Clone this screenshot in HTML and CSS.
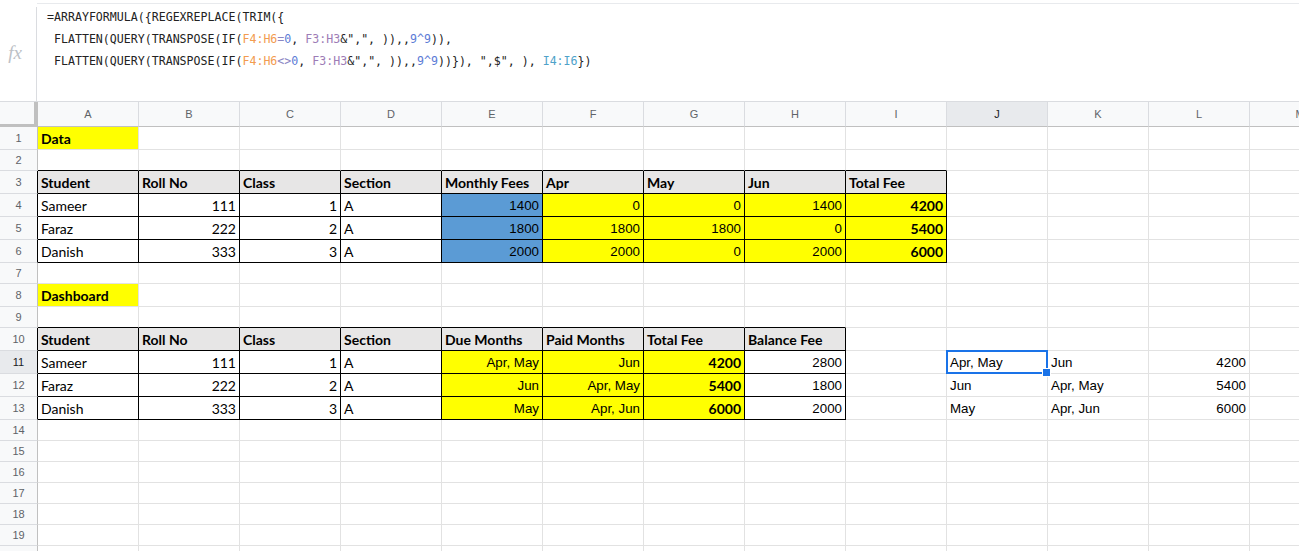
FILE: index.html
```html
<!DOCTYPE html>
<html lang="en">
<head>
    <meta charset="UTF-8">
    <meta name="viewport" content="width=device-width, initial-scale=1.0">
    <title>Fee Dashboard</title>
    <link rel="stylesheet" href="styles.css">
</head>
<body>

<div class="sheet">
    <!-- Formula bar (expanded) -->
    <div class="formula-bar">
        <div class="fx">fx</div>
        <div class="formula">
            <div class="f-line">=ARRAYFORMULA({REGEXREPLACE(TRIM({</div>
            <div class="f-line"> FLATTEN(QUERY(TRANSPOSE(IF(<span class="rg1">F4:H6</span><span class="op">=</span><span class="num">0</span>, <span class="rg2">F3:H3</span>&amp;",", )),,<span class="num">9^9</span>)),</div>
            <div class="f-line"> FLATTEN(QUERY(TRANSPOSE(IF(<span class="rg1">F4:H6</span><span class="op">&lt;&gt;</span><span class="num">0</span>, <span class="rg2">F3:H3</span>&amp;",", )),,<span class="num">9^9</span>))}), ",$", ), <span class="rg3">I4:I6</span>})</div>
        </div>
    </div>

    <!-- Grid -->
    <div class="grid" id="grid"></div>
</div>

<script>
    const COLS = 'ABCDEFGHIJKLM'.split('');
    const TALL = [1, 3, 4, 5, 6, 8, 10, 11, 12, 13];
    const ROWS = 20;

    // [text, classes] per column, starting at A
    const data = {
        1: [['Data', 'y b']],
        3: [['Student', 'th'], ['Roll No', 'th'], ['Class', 'th'], ['Section', 'th'], ['Monthly Fees', 'th'], ['Apr', 'th'], ['May', 'th'], ['Jun', 'th'], ['Total Fee', 'th']],
        4: [['Sameer', ''], ['111', 'n'], ['1', 'n'], ['A', ''], ['1400', 'n p blue'], ['0', 'n p y'], ['0', 'n p y'], ['1400', 'n p y'], ['4200', 'n y b']],
        5: [['Faraz', ''], ['222', 'n'], ['2', 'n'], ['A', ''], ['1800', 'n p blue'], ['1800', 'n p y'], ['1800', 'n p y'], ['0', 'n p y'], ['5400', 'n y b']],
        6: [['Danish', ''], ['333', 'n'], ['3', 'n'], ['A', ''], ['2000', 'n p blue'], ['2000', 'n p y'], ['0', 'n p y'], ['2000', 'n p y'], ['6000', 'n y b']],
        8: [['Dashboard', 'y b']],
        10: [['Student', 'th'], ['Roll No', 'th'], ['Class', 'th'], ['Section', 'th'], ['Due Months', 'th'], ['Paid Months', 'th'], ['Total Fee', 'th'], ['Balance Fee', 'th']],
        11: [['Sameer', ''], ['111', 'n'], ['1', 'n'], ['A', ''], ['Apr, May', 'n p y'], ['Jun', 'n p y'], ['4200', 'n y b'], ['2800', 'n p'], null, ['Apr, May', 'p active'], ['Jun', 'p'], ['4200', 'n p']],
        12: [['Faraz', ''], ['222', 'n'], ['2', 'n'], ['A', ''], ['Jun', 'n p y'], ['Apr, May', 'n p y'], ['5400', 'n y b'], ['1800', 'n p'], null, ['Jun', 'p'], ['Apr, May', 'p'], ['5400', 'n p']],
        13: [['Danish', ''], ['333', 'n'], ['3', 'n'], ['A', ''], ['May', 'n p y'], ['Apr, Jun', 'n p y'], ['6000', 'n y b'], ['2000', 'n p'], null, ['May', 'p'], ['Apr, Jun', 'p'], ['6000', 'n p']]
    };

    // cells inside the two bordered tables
    function boxed(r, c) {
        return (r >= 3 && r <= 6 && c >= 0 && c < 9) || (r >= 10 && r <= 13 && c >= 0 && c < 8);
    }

    const grid = document.getElementById('grid');

    function addCell(row, text, cls) {
        const cell = document.createElement('div');
        cell.className = 'cell ' + cls;
        cell.textContent = text;
        row.appendChild(cell);
        return cell;
    }

    // column headers
    const head = document.createElement('div');
    head.className = 'row head';
    addCell(head, '', 'corner');
    COLS.forEach(col => addCell(head, col, 'ch' + (col === 'J' ? ' sel' : '')));
    grid.appendChild(head);

    for (let r = 1; r <= ROWS; r++) {
        const row = document.createElement('div');
        row.className = 'row' + (TALL.includes(r) ? ' tall' : '');

        let rh = 'rh';
        if (r === 11) rh += ' sel';
        if (boxed(r, 0)) rh += ' edge-r';
        addCell(row, r, rh);

        const values = data[r] || [];
        COLS.forEach((col, c) => {
            const item = values[c];
            let cls = item ? item[1] : '';
            if (boxed(r, c)) cls += ' bx';
            else if (boxed(r + 1, c)) cls += ' edge-b';
            addCell(row, item ? item[0] : '', cls);
        });
        grid.appendChild(row);
    }
</script>

</body>
</html>
```

FILE: styles.css
```css
* {
    box-sizing: border-box;
}
body {
    margin: 0;
    background: #fff;
    font-family: "Liberation Sans", Arial, sans-serif;
}
.sheet {
    width: 1299px;
    height: 551px;
    overflow: hidden;
}

/* formula bar */
.formula-bar {
    display: flex;
    height: 102px;
    border-bottom: 1px solid #dadce0;
}
.fx {
    width: 37px;
    margin-top: 7px;
    padding: 0 6px 2px 0;
    border-right: 1px solid #dadce0;
    display: flex;
    align-items: center;
    justify-content: center;
    font: italic 19px "Liberation Serif", serif;
    color: #bdc1c6;
}
.formula {
    flex: 1;
    margin-top: 3px;
    padding: 2px 0 0 10px;
    border-top: 1px solid #e8eaed;
    font-family: "DejaVu Sans Mono", monospace;
    font-size: 11.6px;
    color: #222;
}
.f-line {
    height: 22px;
    line-height: 22px;
    white-space: pre;
}
.rg1 { color: #f29b50; }
.rg2 { color: #9d7cb6; }
.rg3 { color: #4ea2c9; }
.num { color: #5b7bd6; }
.op { color: #8a86c4; }

/* grid */
.row {
    display: grid;
    grid-template-columns: 38px repeat(13, 101px);
    height: 21px;
}
.row.tall {
    height: 23px;
}
.row.head {
    height: 25px;
}
.cell {
    display: flex;
    align-items: center;
    padding: 0 3px;
    border-right: 1px solid #e2e2e2;
    border-bottom: 1px solid #e2e2e2;
    white-space: nowrap;
    overflow: hidden;
    font-family: Lato, "Liberation Sans", sans-serif;
    font-size: 14px;
    color: #000;
}

/* headers */
.corner {
    background: #f8f9fa;
    border-right: 4px solid #c0c0c0;
    border-bottom: 3px solid #c0c0c0;
}
.ch, .rh {
    justify-content: center;
    padding: 0;
    background: #f8f9fa;
    font-family: "Liberation Sans", Arial, sans-serif;
    font-size: 11px;
    color: #5f6368;
}
.ch {
    border-right-color: #dadce0;
    border-bottom-color: #c0c0c0;
}
.rh {
    border-right-color: #c0c0c0;
    border-bottom-color: #dadce0;
}
.ch.sel, .rh.sel {
    background: #e8eaed;
    color: #202124;
}

/* cell formats */
.th {
    background: #e7e6e6;
    font-weight: 700;
}
.b {
    font-weight: 700;
}
.n {
    justify-content: flex-end;
}
.p {
    font-family: "Liberation Sans", Arial, sans-serif;
    font-size: 13.33px;
}
.y {
    background: #ffff00;
}
.blue {
    background: #5b9bd5;
}
.bx {
    border-right-color: #000;
    border-bottom-color: #000;
}
.edge-b {
    border-bottom-color: #000;
}
.rh.edge-r {
    border-right-color: #000;
}

/* selected cell */
.active {
    position: relative;
    overflow: visible;
    z-index: 1;
}
.active::before {
    content: '';
    position: absolute;
    top: -1px;
    left: -1px;
    right: -1px;
    bottom: -1px;
    border: 2px solid #1a73e8;
}
.active::after {
    content: '';
    position: absolute;
    right: -4px;
    bottom: -4px;
    width: 7px;
    height: 7px;
    background: #1a73e8;
    border: 1px solid #fff;
}
```
